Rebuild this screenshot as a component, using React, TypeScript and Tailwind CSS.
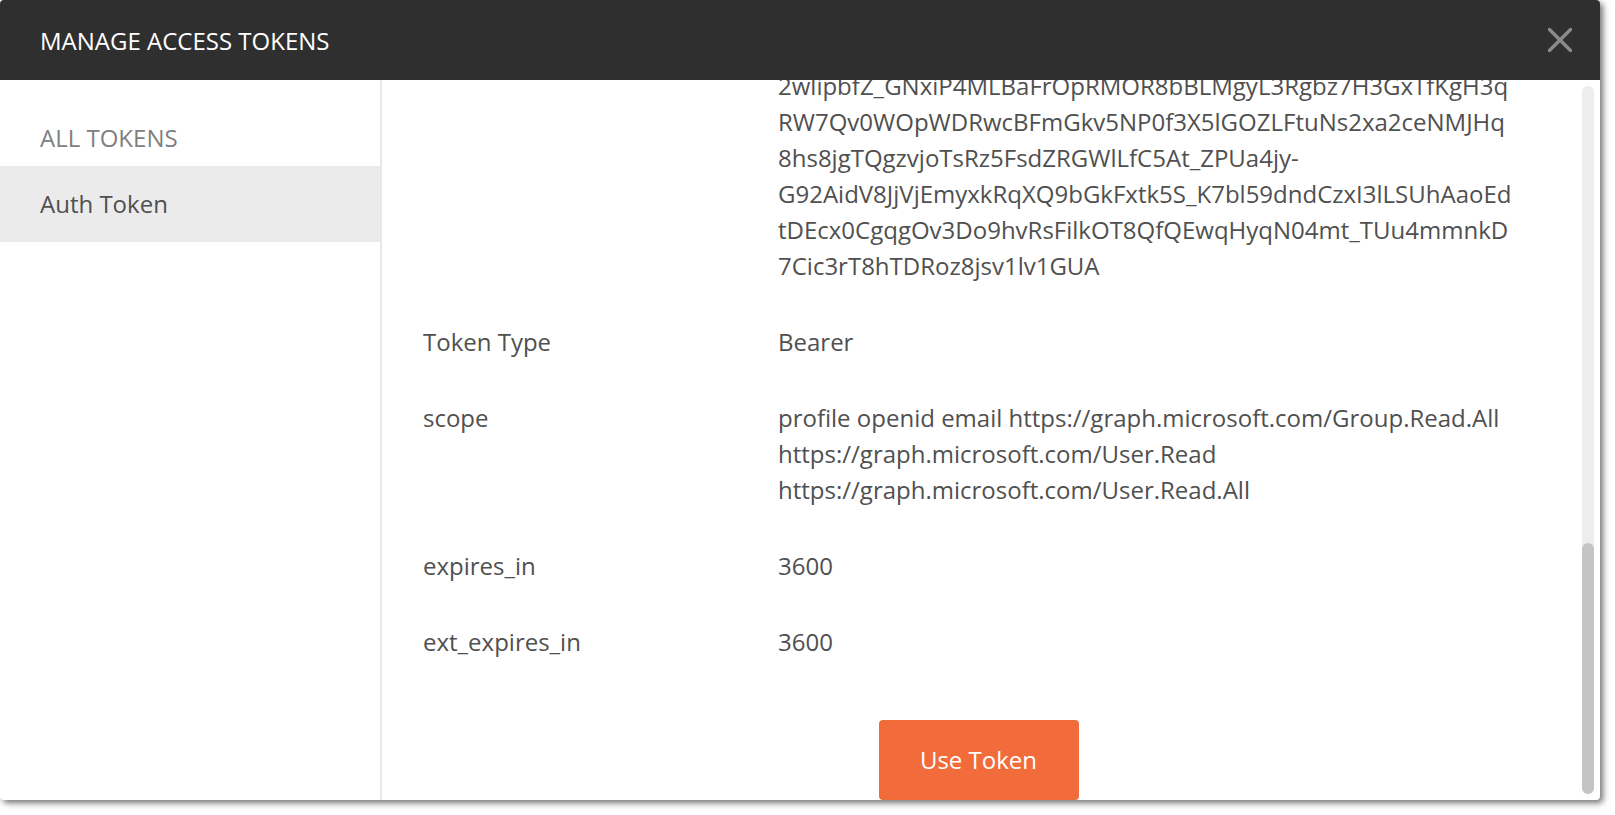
import React, { useLayoutEffect, useRef } from 'react'

interface TokenField {
  label: string
  lines: string[]
}

// token lines are kept as rendered so wrapping matches the dialog
const fields: TokenField[] = [
  {
    label: 'Access Token',
    lines: [
      'eyJ0eXAiOiJKV1QiLCJub25jZSI6IkFRQUJBQUFBQUFEWDhHQ',
      'aTZKdV9hRGhwQmtQWjVXVGJ6Ny1GR2xFRzBwNE9hX3JvT3dRb',
      'UdfN2VpOWZqb3lZbVNTMUpHMEJsRlhBIiwiYWxnIjoiUlMyNT',
      'YiLCJ4NXQiOiJpQmpMMVJjcXpoaXk0ZnB4SXhkWnFvaE0yWWsi',
      'LCJraWQiOiJpQmpMMVJjcXpoaXk0ZnB4SXhkWnFvaE0yWWsif',
      '2wlipbfZ_GNxiP4MLBaFrOpRMOR8bBLMgyL3Rgbz7H3GxTfKgH3q',
      'RW7Qv0WOpWDRwcBFmGkv5NP0f3X5lGOZLFtuNs2xa2ceNMJHq',
      '8hs8jgTQgzvjoTsRz5FsdZRGWlLfC5At_ZPUa4jy-',
      'G92AidV8JjVjEmyxkRqXQ9bGkFxtk5S_K7bl59dndCzxI3lLSUhAaoEd',
      'tDEcx0CgqgOv3Do9hvRsFilkOT8QfQEwqHyqN04mt_TUu4mmnkD',
      '7Cic3rT8hTDRoz8jsv1lv1GUA',
    ],
  },
  { label: 'Token Type', lines: ['Bearer'] },
  {
    label: 'scope',
    lines: [
      'profile openid email https://graph.microsoft.com/Group.Read.All',
      'https://graph.microsoft.com/User.Read',
      'https://graph.microsoft.com/User.Read.All',
    ],
  },
  { label: 'expires_in', lines: ['3600'] },
  { label: 'ext_expires_in', lines: ['3600'] },
]

const App: React.FC = () => {
  const scrollRef = useRef<HTMLDivElement>(null)

  useLayoutEffect(() => {
    const el = scrollRef.current
    if (el) el.scrollTop = el.scrollHeight
  }, [])

  return (
    <div className="w-full h-[815px] bg-white font-['Open_Sans',sans-serif]">
      <div className="w-[1600px] h-[800px] flex flex-col rounded-[4px] overflow-hidden bg-white shadow-[3px_3px_6px_rgba(0,0,0,0.55)]">
        {/* header */}
        <div className="h-[80px] shrink-0 bg-[#2f2f2f] flex items-center justify-between pl-[40px] pr-[28px]">
          <span className="pt-[2px] text-[24px] text-white">MANAGE ACCESS TOKENS</span>
          <svg width="24" height="24" viewBox="0 0 24 24">
            <path d="M1.5 1.5 L22.5 22.5 M22.5 1.5 L1.5 22.5" stroke="#8b8b8b" strokeWidth="3.4" strokeLinecap="square" />
          </svg>
        </div>

        <div className="flex flex-1 min-h-0">
          {/* sidebar */}
          <div className="w-[382px] shrink-0 border-r-2 border-[#e8e8e8] pt-[40px]">
            <div className="px-[40px] text-[24px] leading-[36px] text-[#808080]">ALL TOKENS</div>
            <div className="mt-[10px] bg-[#ebebeb] px-[40px] py-[20px] text-[24px] leading-[36px] text-[#505050]">
              Auth Token
            </div>
          </div>

          {/* token details */}
          <div className="relative flex-1 min-w-0">
            <div ref={scrollRef} className="h-full overflow-y-auto [scrollbar-width:none]">
              <div className="pl-[41px] pr-[66px] flex flex-col text-[24px] leading-[36px] text-[#505050]">
                <div className="flex flex-col gap-[40px]">
                  {fields.map(f => (
                    <div key={f.label} className="flex">
                      <div className="w-[355px] shrink-0">{f.label}</div>
                      <div className="flex flex-col whitespace-nowrap">
                        {f.lines.map((l, i) => (
                          <span key={i}>{l}</span>
                        ))}
                      </div>
                    </div>
                  ))}
                </div>
                <div className="flex justify-center mt-[60px]">
                  <button className="w-[200px] h-[80px] rounded-[4px] bg-[#f26c3b] text-white text-[24px]">
                    Use Token
                  </button>
                </div>
              </div>
            </div>

            {/* scrollbar */}
            <div className="absolute top-[6px] bottom-[6px] right-[6px] w-[12px] rounded-full bg-[#ededed] flex flex-col justify-end">
              <div className="h-[251px] rounded-full bg-[#c4c4c4]" />
            </div>
          </div>
        </div>
      </div>
    </div>
  )
}

export default App
